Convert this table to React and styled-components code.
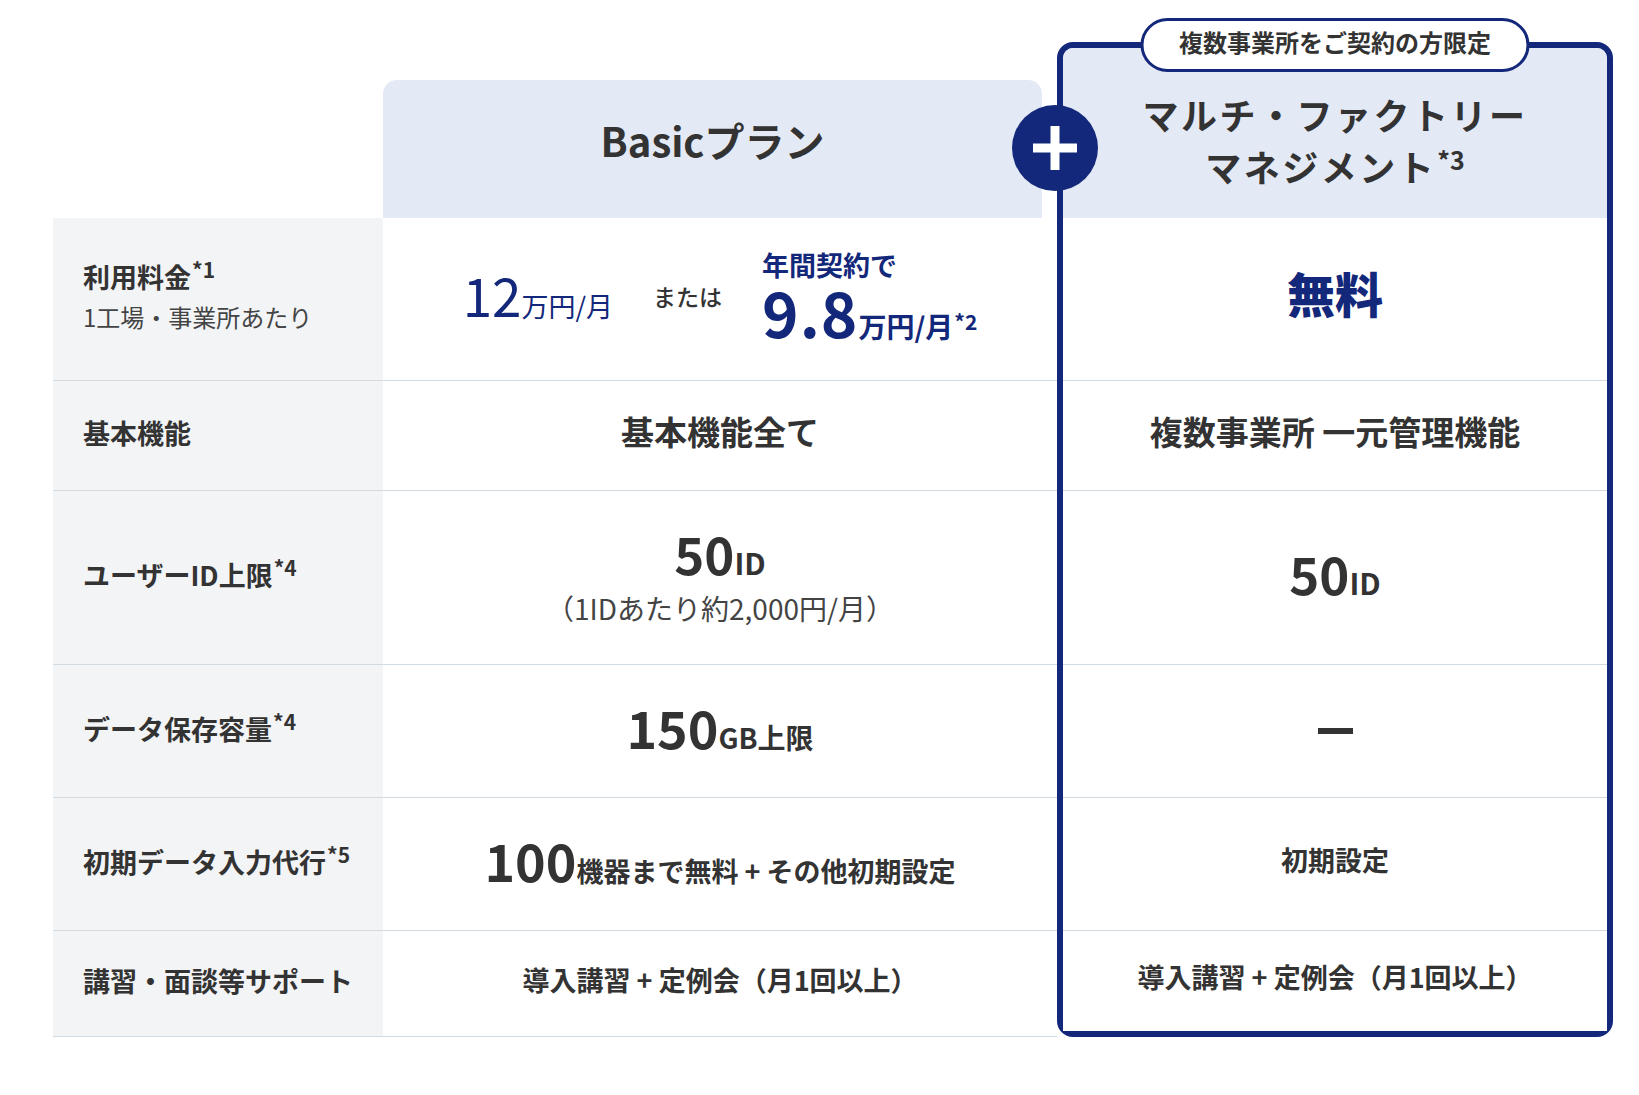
import React from "react";
import styled, { createGlobalStyle } from "styled-components";

const NAVY = "#13287a";
const TEXT = "#333333";
const LINE = "#d3dbe2";
const HEAD_BG = "#e3e9f5";
const LABEL_BG = "#f3f4f6";

const GlobalStyle = createGlobalStyle`
  html, body {
    margin: 0;
    padding: 0;
    background: #ffffff;
  }
  body {
    font-family: "Noto Sans CJK JP", "Noto Sans", sans-serif;
    color: ${TEXT};
    text-spacing-trim: space-all;
    -webkit-font-smoothing: antialiased;
  }
`;

const Page = styled.div`
  display: flex;
  align-items: flex-start;
  padding: 42px 0 0 53px;
  width: 1639px;
  height: 1095px;
  box-sizing: border-box;
`;

const Table = styled.div`
  display: grid;
  grid-template-columns: 330px 674px;
  grid-template-rows: 176px 163px 110px 174px 133px 133px 106px;
`;

const Corner = styled.div``;

const BasicHeader = styled.div`
  margin: 38px 15px 0 0;
  background: ${HEAD_BG};
  border-radius: 14px 14px 0 0;
  display: flex;
  align-items: center;
  justify-content: center;
  padding-bottom: 18px;
  font-size: 40px;
  font-weight: 700;
  color: ${TEXT};
`;

const LabelCell = styled.div`
  background: ${LABEL_BG};
  border-bottom: 1px solid ${LINE};
  box-sizing: border-box;
  padding: 0 0 6px 30px;
  display: flex;
  flex-direction: column;
  justify-content: center;
`;

const LabelMain = styled.div`
  font-size: 27px;
  font-weight: 700;
  line-height: 39px;
  color: ${TEXT};
  white-space: nowrap;
`;

const LabelSub = styled.div`
  font-size: 24px;
  font-weight: 400;
  line-height: 36px;
  margin-top: 3px;
  color: #444444;
`;

const Sup = styled.sup`
  font-size: ${(p) => p.$size || 21}px;
  font-weight: 700;
  line-height: 0;
  vertical-align: baseline;
  position: relative;
  top: ${(p) => -(p.$raise || 10)}px;
  margin-left: 1px;
  letter-spacing: 0;
`;

const Cell = styled.div`
  border-bottom: ${(p) => (p.$last ? "none" : `1px solid ${LINE}`)};
  box-sizing: border-box;
  display: flex;
  flex-direction: ${(p) => (p.$column ? "column" : "row")};
  align-items: center;
  justify-content: center;
  gap: ${(p) => p.$gap || 0}px;
  padding-bottom: ${(p) => (p.$pb === undefined ? 8 : p.$pb)}px;
  background: #ffffff;
`;

const PriceGroup = styled.div`
  display: flex;
  align-items: baseline;
  color: ${NAVY};
  line-height: 1;
`;

const Num = styled.span`
  font-size: ${(p) => p.$size}px;
  font-weight: ${(p) => p.$weight || 700};
  letter-spacing: ${(p) => p.$ls || 0}px;
  line-height: 1;
`;

const Unit = styled.span`
  font-size: ${(p) => p.$size}px;
  font-weight: ${(p) => p.$weight || 700};
  line-height: 1;
`;

const Or = styled.span`
  font-size: 23px;
  font-weight: 500;
  color: ${TEXT};
  line-height: 1;
  margin-top: 4px;
`;

const AnnualBlock = styled.div`
  display: flex;
  flex-direction: column;
  align-items: flex-start;
  color: ${NAVY};
`;

const AnnualLead = styled.div`
  font-size: 27px;
  font-weight: 700;
  line-height: 31px;
`;

const AnnualPrice = styled.div`
  display: flex;
  align-items: baseline;
  line-height: 60px;
  height: 60px;
`;

const ValueLine = styled.div`
  display: flex;
  align-items: baseline;
  color: ${TEXT};
  line-height: 1;
`;

const Text = styled.span`
  font-size: ${(p) => p.$size || 27}px;
  font-weight: ${(p) => p.$weight || 700};
  color: ${(p) => (p.$navy ? NAVY : TEXT)};
  line-height: 1.3;
`;

const SubNote = styled.div`
  font-size: 28px;
  font-weight: 400;
  color: #444444;
  line-height: 1.2;
  margin-top: 13px;
`;

const MultiCard = styled.div`
  position: relative;
  width: 556px;
  height: 995px;
  box-sizing: border-box;
  border: 6px solid ${NAVY};
  border-radius: 16px;
  display: grid;
  grid-template-rows: 170px 163px 110px 174px 133px 133px 100px;
`;

const MultiHeader = styled.div`
  background: ${HEAD_BG};
  border-radius: 10px 10px 0 0;
  display: flex;
  align-items: center;
  justify-content: center;
  padding-top: 14px;
`;

const MultiTitle = styled.h2`
  margin: 0;
  text-align: center;
  font-size: 36px;
  font-weight: 700;
  letter-spacing: 2.5px;
  line-height: 52px;
  color: ${TEXT};
`;

const Badge = styled.div`
  position: absolute;
  top: -30px;
  left: 50%;
  transform: translateX(-50%);
  width: 389px;
  height: 54px;
  box-sizing: border-box;
  border: 3px solid ${NAVY};
  border-radius: 27px;
  background: #ffffff;
  display: flex;
  align-items: center;
  justify-content: center;
  padding-bottom: 8px;
  font-size: 24px;
  font-weight: 700;
  color: ${TEXT};
  white-space: nowrap;
`;

const PlusBadge = styled.div`
  position: absolute;
  left: -51px;
  top: 57px;
  width: 86px;
  height: 86px;
  border-radius: 50%;
  background: ${NAVY};
  display: flex;
  align-items: center;
  justify-content: center;
`;

const Dash = styled.span`
  display: block;
  width: 35px;
  height: 6px;
  background: ${TEXT};
  margin-top: 8px;
`;

function PlusIcon() {
  return (
    <svg width="44" height="44" viewBox="0 0 44 44" aria-hidden="true">
      <rect x="0" y="17.5" width="44" height="9" fill="#ffffff" />
      <rect x="17.5" y="0" width="9" height="44" fill="#ffffff" />
    </svg>
  );
}

export default function App() {
  return (
    <>
      <GlobalStyle />
      <Page>
        <Table>
          <Corner />
          <BasicHeader>Basicプラン</BasicHeader>

          <LabelCell>
            <LabelMain>
              利用料金<Sup>*1</Sup>
            </LabelMain>
            <LabelSub>1工場・事業所あたり</LabelSub>
          </LabelCell>
          <Cell $gap={40} $pb={10}>
            <PriceGroup>
              <Num $size={53} $weight={400}>12</Num>
              <Unit $size={27} $weight={400}>万円/月</Unit>
            </PriceGroup>
            <Or>または</Or>
            <AnnualBlock>
              <AnnualLead>年間契約で</AnnualLead>
              <AnnualPrice>
                <Num $size={62} $ls={1}>9.8</Num>
                <Unit $size={28}>万円/月</Unit>
                <Sup $size={21} $raise={8}>*2</Sup>
              </AnnualPrice>
            </AnnualBlock>
          </Cell>

          <LabelCell>
            <LabelMain>基本機能</LabelMain>
          </LabelCell>
          <Cell>
            <Text $size={33}>基本機能全て</Text>
          </Cell>

          <LabelCell>
            <LabelMain>
              ユーザーID上限<Sup>*4</Sup>
            </LabelMain>
          </LabelCell>
          <Cell $column $pb={2}>
            <ValueLine>
              <Num $size={51}>50</Num>
              <Unit $size={30}>ID</Unit>
            </ValueLine>
            <SubNote>（1IDあたり約2,000円/月）</SubNote>
          </Cell>

          <LabelCell>
            <LabelMain>
              データ保存容量<Sup>*4</Sup>
            </LabelMain>
          </LabelCell>
          <Cell>
            <ValueLine>
              <Num $size={52}>150</Num>
              <Unit $size={28}>GB上限</Unit>
            </ValueLine>
          </Cell>

          <LabelCell>
            <LabelMain>
              初期データ入力代行<Sup>*5</Sup>
            </LabelMain>
          </LabelCell>
          <Cell>
            <ValueLine>
              <Num $size={52}>100</Num>
              <Unit $size={27}>機器まで無料 + その他初期設定</Unit>
            </ValueLine>
          </Cell>

          <LabelCell>
            <LabelMain>講習・面談等サポート</LabelMain>
          </LabelCell>
          <Cell>
            <Text $size={27}>導入講習 + 定例会（月1回以上）</Text>
          </Cell>
        </Table>

        <MultiCard>
          <Badge>複数事業所をご契約の方限定</Badge>
          <PlusBadge>
            <PlusIcon />
          </PlusBadge>
          <MultiHeader>
            <MultiTitle>
              マルチ・ファクトリー
              <br />
              マネジメント<Sup $size={25} $raise={12}>*3</Sup>
            </MultiTitle>
          </MultiHeader>
          <Cell $pb={14}>
            <Text $size={48} $weight={900} $navy>
              無料
            </Text>
          </Cell>
          <Cell>
            <Text $size={33}>複数事業所 一元管理機能</Text>
          </Cell>
          <Cell>
            <ValueLine>
              <Num $size={51}>50</Num>
              <Unit $size={30}>ID</Unit>
            </ValueLine>
          </Cell>
          <Cell>
            <Dash />
          </Cell>
          <Cell>
            <Text $size={27}>初期設定</Text>
          </Cell>
          <Cell $last>
            <Text $size={27}>導入講習 + 定例会（月1回以上）</Text>
          </Cell>
        </MultiCard>
      </Page>
    </>
  );
}
